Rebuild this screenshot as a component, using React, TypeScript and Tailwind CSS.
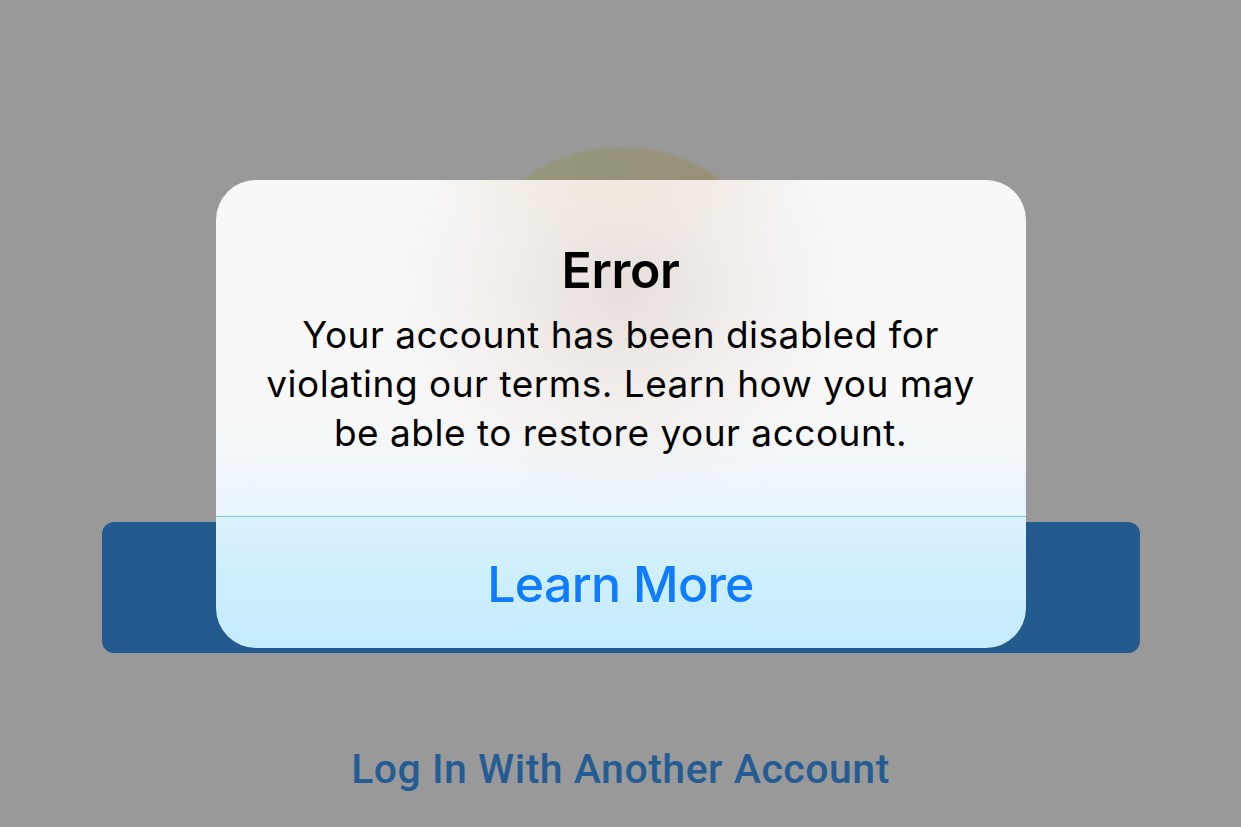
import React from "react";

const App = () => {
  return (
    <div className="relative h-[827px] w-full overflow-hidden bg-[#999999]">
      {/* page behind the alert */}
      <div className="flex flex-col items-center">
        <div className="mt-[147px] h-[336px] w-[336px] rounded-full bg-[linear-gradient(110deg,#939a7c_0%,#97937a_45%,#9c8a6f_100%)] blur-[1px]" />
        <div className="mt-[39px] h-[131px] w-[1038px] rounded-[12px] bg-[#235b8f]" />
        <p className="mt-[92px] font-['Roboto',sans-serif] text-[41px] font-medium leading-[48px] tracking-[0.5px] text-[#245c93]">
          Log In With Another Account
        </p>
      </div>

      {/* alert */}
      <div className="absolute inset-0 flex items-center justify-center">
        <div className="flex h-[468px] w-[810px] flex-col overflow-hidden rounded-[40px] font-['Inter',sans-serif]">
          <div className="flex h-[336px] flex-col items-center bg-[image:radial-gradient(ellipse_180px_80px_at_50%_0%,rgba(242,232,220,0.9)_0%,rgba(242,232,220,0)_100%),radial-gradient(ellipse_240px_220px_at_50%_32%,rgba(228,218,214,0.85)_0%,rgba(236,228,224,0.5)_50%,rgba(248,248,248,0)_100%),linear-gradient(180deg,#f8f8f8_0%,#f8f8f8_70%,#e8f4fd_100%)] pt-[62px] text-center text-black">
            <h1 className="text-[50px] font-semibold leading-[56px] tracking-[-0.3px]">Error</h1>
            <p className="mt-[12px] px-8 text-[37px] font-normal leading-[49px] tracking-[0.5px]">
              Your account has been disabled for
              <br />
              violating our terms. Learn how you may
              <br />
              be able to restore your account.
            </p>
          </div>
          <div className="h-[1px] bg-[#7ccbf8]" />
          <div className="flex flex-1 items-center justify-center bg-[linear-gradient(180deg,#dcf2fd_0%,#cdeefd_50%,#c5ebfd_100%)]">
            <span className="mt-[4px] text-[50px] font-medium leading-none tracking-[-0.7px] text-[#0f7cfd]">Learn More</span>
          </div>
        </div>
      </div>
    </div>
  );
};

export default App;
